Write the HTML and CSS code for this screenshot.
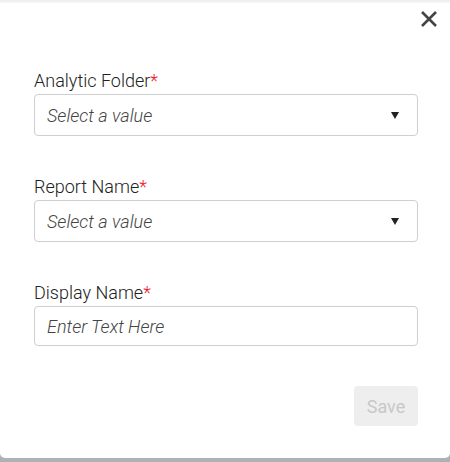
FILE: index.html
```html
<!DOCTYPE html>
<html>
<head>
<meta charset="utf-8">
<link rel="stylesheet" href="styles.css">
</head>
<body>
<div class="dialog">
  <div class="top-shade"></div>
  <div class="header">
    <button class="close" aria-label="Close">
      <svg width="18" height="18" viewBox="0 0 18 18"><path d="M2 2 L16 16 M16 2 L2 16" stroke="#444" stroke-width="2.6" stroke-linecap="butt" fill="none"/></svg>
    </button>
  </div>
  <form class="form">
    <div class="field first">
      <label class="label">Analytic Folder<span class="req">*</span></label>
      <div class="select"><span class="placeholder">Select a value</span><span class="arrow"></span></div>
    </div>
    <div class="field">
      <label class="label">Report Name<span class="req">*</span></label>
      <div class="select"><span class="placeholder">Select a value</span><span class="arrow"></span></div>
    </div>
    <div class="field">
      <label class="label">Display Name<span class="req">*</span></label>
      <input class="input" type="text" placeholder="Enter Text Here">
    </div>
    <div class="footer">
      <button type="button" class="save" disabled>Save</button>
    </div>
  </form>
</div>
</body>
</html>
```
FILE: styles.css
```css
html, body {
  margin: 0;
  padding: 0;
}
body {
  width: 450px;
  height: 462px;
  background: linear-gradient(#c4cacd, #aab2b6);
  font-family: Roboto, "Liberation Sans", sans-serif;
  font-weight: 300;
  overflow: hidden;
}
.dialog {
  height: 458px;
  background: #fff;
  border-radius: 0 0 5px 5px;
  display: flex;
  flex-direction: column;
}
.top-shade {
  height: 3px;
  background: linear-gradient(#ededed, #f6f6f6);
}
.header {
  display: flex;
  justify-content: flex-end;
  padding: 7px 12px 0 0;
}
.close {
  border: 0;
  background: none;
  padding: 0;
  margin: 0;
  width: 18px;
  height: 18px;
  display: block;
}
.close svg { display: block; }
.form {
  padding: 0 32px 0 34px;
  margin: 0;
}
.field { margin-top: 41px; }
.field.first { margin-top: 43px; }
.label {
  display: block;
  font-size: 18px;
  font-weight: 300;
  line-height: 19px;
  color: #222;
  margin-bottom: 4px;
}
.req { color: #f0141e; }
.select {
  box-sizing: border-box;
  height: 42px;
  border: 1px solid #cfcfcf;
  border-radius: 4px;
  padding: 0 18px 0 12px;
  display: flex;
  align-items: center;
  justify-content: space-between;
}
.placeholder {
  font-style: italic;
  font-weight: 300;
  font-size: 18px;
  color: #444;
}
.arrow {
  width: 0;
  height: 0;
  border-left: 4px solid transparent;
  border-right: 4px solid transparent;
  border-top: 7px solid #222;
  margin-top: 1px;
}
.input {
  box-sizing: border-box;
  display: block;
  width: 100%;
  height: 40px;
  border: 1px solid #cfcfcf;
  border-radius: 4px;
  padding: 0 12px;
  font-family: Roboto, "Liberation Sans", sans-serif;
  font-weight: 300;
  font-size: 18px;
  outline: none;
}
.input::placeholder {
  font-style: italic;
  color: #444;
}
.footer {
  display: flex;
  justify-content: flex-end;
  margin-top: 40px;
}
.save {
  width: 64px;
  height: 40px;
  border: 0;
  border-radius: 4px;
  background: #eeeeee;
  color: #c8c8c8;
  font-family: Roboto, "Liberation Sans", sans-serif;
  font-weight: 400;
  font-size: 18px;
  padding: 0;
}
```
